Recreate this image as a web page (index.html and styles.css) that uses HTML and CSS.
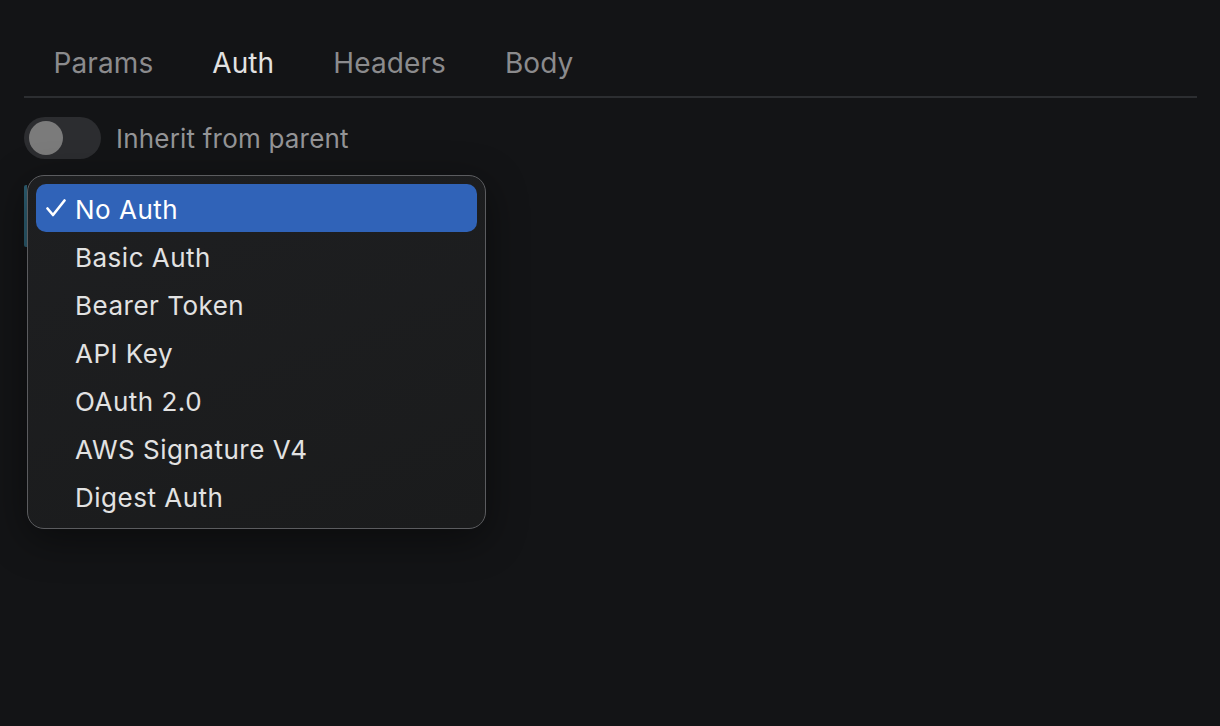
FILE: index.html
```html
<!DOCTYPE html>
<html lang="en">

<head>
    <meta charset="UTF-8">
    <meta name="viewport" content="width=device-width, initial-scale=1.0">
    <title>Auth</title>
    <link rel="stylesheet" href="styles.css">
</head>

<body>
    <div id="panel">
        <ul class="tabs">
            <li>Params</li>
            <li class="active">Auth</li>
            <li>Headers</li>
            <li>Body</li>
        </ul>

        <div class="inherit">
            <span class="switch"><span class="knob"></span></span>
            <span class="label">Inherit from parent</span>
        </div>

        <div class="picker">
            <span class="select-edge"></span>
            <ul class="menu">
                <li class="checked">
                    <span class="tick">
                        <svg width="20" height="18" viewBox="0 0 20 18">
                            <path d="M1.5 9.5 L7 16 L18.5 1.5" fill="none" stroke="#fff" stroke-width="2.6" stroke-linecap="round" stroke-linejoin="round" />
                        </svg>
                    </span>No Auth
                </li>
                <li><span class="tick"></span>Basic Auth</li>
                <li><span class="tick"></span>Bearer Token</li>
                <li><span class="tick"></span>API Key</li>
                <li><span class="tick"></span>OAuth 2.0</li>
                <li><span class="tick"></span>AWS Signature V4</li>
                <li><span class="tick"></span>Digest Auth</li>
            </ul>
        </div>
    </div>
</body>

</html>
```

FILE: styles.css
```css
* {
    margin: 0;
    padding: 0;
    box-sizing: border-box;
}

html,
body {
    height: 100%;
    background-color: #131416;
}

body {
    font-family: Inter, "Noto Sans", sans-serif;
    color: #e4e4e4;
}

#panel {
    padding: 40px 23px 0 24px;
}

.tabs {
    display: flex;
    list-style: none;
    height: 58px;
    border-bottom: 2px solid #2c2e31;
}

.tabs li {
    padding: 0 29.5px;
    height: 46px;
    line-height: 46px;
    font-size: 28px;
    letter-spacing: 0.1px;
    color: #8b8b8d;
}

.tabs .active {
    color: #e2e2e2;
}

.inherit {
    display: flex;
    align-items: center;
    margin-top: 19px;
    height: 42px;
}

.switch {
    display: block;
    width: 77px;
    height: 42px;
    border-radius: 21px;
    background-color: #2c2d30;
    padding: 4px 5px;
}

.knob {
    display: block;
    width: 34px;
    height: 34px;
    border-radius: 50%;
    background-color: #7b7b7b;
}

.label {
    margin-left: 15px;
    font-size: 26px;
    letter-spacing: 0.2px;
    color: #949496;
}

.picker {
    position: relative;
    margin-top: 16px;
}

/* edge of the select field showing behind the open menu */
.select-edge {
    position: absolute;
    left: 0;
    top: 10px;
    width: 3px;
    height: 62px;
    border-radius: 2px 0 0 2px;
    background-color: #2d5f73;
}

.menu {
    position: relative;
    list-style: none;
    width: 459px;
    margin-left: 3px;
    padding: 8px;
    border: 1px solid #5b5c5f;
    border-radius: 17px;
    background: linear-gradient(160deg, #1e1f21, #1a1b1c);
    box-shadow: 0 10px 40px rgba(0, 0, 0, 0.45);
}

.menu li {
    display: flex;
    align-items: center;
    height: 48px;
    padding: 3px 0 0 10px;
    border-radius: 10px;
    font-size: 26px;
    letter-spacing: 0.5px;
    color: #e2e2e2;
}

.menu .checked {
    background-color: #3063b8;
    color: #fff;
}

.tick {
    display: flex;
    align-items: center;
    width: 29px;
    height: 20px;
    margin-top: -3px;
}
```
